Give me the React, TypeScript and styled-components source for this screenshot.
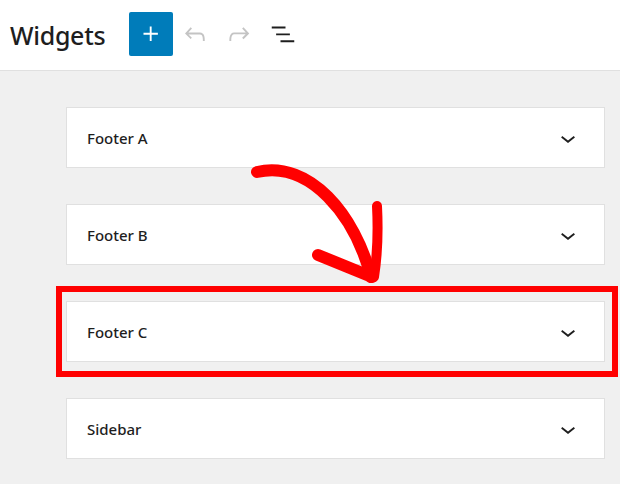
import * as React from "react";
import styled, { createGlobalStyle } from "styled-components";

const GlobalStyle = createGlobalStyle`
  body {
    margin: 0;
    background: #f0f0f0;
    font-family: "Noto Sans", "Open Sans", sans-serif;
    color: #1e1e1e;
  }
`;

const Page = styled.div`
  position: relative;
  min-height: 484px;
  overflow: hidden;
`;

const Header = styled.header`
  height: 70px;
  display: flex;
  align-items: center;
  padding-left: 10px;
  background: #fff;
  border-bottom: 1px solid #e0e0e0;
`;

const Title = styled.h1`
  margin: 0 24px 0 0;
  font-size: 25px;
  font-weight: 500;
  letter-spacing: -0.3px;
`;

const Toolbar = styled.div`
  display: flex;
  align-items: center;
  margin-top: -2px;
`;

const ToolButton = styled.button<{ $primary?: boolean }>`
  width: 44px;
  height: 44px;
  padding: 0;
  border: none;
  border-radius: 2px;
  display: flex;
  align-items: center;
  justify-content: center;
  background: ${(p) => (p.$primary ? "#007cba" : "transparent")};
  color: ${(p) => (p.$primary ? "#fff" : "#1e1e1e")};
  &:disabled {
    color: #c4c4c4;
  }
  svg {
    width: 30px;
    height: 30px;
    fill: currentColor;
  }
`;

const Areas = styled.main`
  display: flex;
  flex-direction: column;
  gap: 36px;
  padding: 36px 15px 0 66px;
`;

const Panel = styled.div`
  height: 61px;
  box-sizing: border-box;
  display: flex;
  align-items: center;
  justify-content: space-between;
  padding: 0 21px 0 20px;
  background: #fff;
  border: 1px solid #e0e0e0;
  font-size: 15px;
  font-weight: 500;
  svg {
    width: 30px;
    height: 30px;
    fill: #1e1e1e;
  }
`;

const Highlight = styled.div`
  border: 6px solid #ff0000;
  margin: -15px -13px -15px -10px;
  padding: 9px 7px 9px 4px;
`;

const Annotation = styled.svg`
  position: absolute;
  left: 0;
  top: 0;
  pointer-events: none;
`;

const Chevron = () => (
  <svg viewBox="0 0 24 24">
    <path d="M17.5 11.6L12 16l-5.5-4.4.9-1.2L12 14l4.6-3.6 1 1.2z" />
  </svg>
);

const AreaPanel = ({ name }: { name: string }) => (
  <Panel>
    <span>{name}</span>
    <Chevron />
  </Panel>
);

export default function App() {
  return (
    <Page>
      <GlobalStyle />
      <Header>
        <Title>Widgets</Title>
        <Toolbar>
          <ToolButton $primary aria-label="Add block">
            <svg viewBox="0 0 24 24">
              <path d="M11 12.5v5h1.5v-5h5V11h-5V6H11v5H6v1.5h5z" />
            </svg>
          </ToolButton>
          <ToolButton disabled aria-label="Undo">
            <svg viewBox="0 0 24 24">
              <path d="M18.3 11.7c-.6-.6-1.4-.9-2.3-.9H6.7l2.9-3.3-1.1-1-4.5 5L8.5 16l1-1-2.7-2.7H16c.5 0 .9.2 1.3.5 1 1 1 3.4 1 4.5v.3h1.5v-.2c0-1.5 0-4.3-1.5-5.7z" />
            </svg>
          </ToolButton>
          <ToolButton disabled aria-label="Redo">
            <svg viewBox="0 0 24 24">
              <path d="M15.6 6.5l-1.1 1 2.9 3.3H8c-.9 0-1.7.3-2.3.9-1.4 1.5-1.4 4.2-1.4 5.6v.2h1.5v-.3c0-1.1 0-3.5 1-4.5.3-.3.7-.5 1.3-.5h9.2L14.5 15l1.1 1.1 4.6-4.6-4.6-5z" />
            </svg>
          </ToolButton>
          <ToolButton aria-label="List view">
            <svg viewBox="0 0 24 24">
              <path d="M3 6h11v1.5H3V6zm3.5 5.5h11V13h-11v-1.5zM21 17H10v1.5h11V17z" />
            </svg>
          </ToolButton>
        </Toolbar>
      </Header>
      <Areas>
        <AreaPanel name="Footer A" />
        <AreaPanel name="Footer B" />
        <Highlight>
          <AreaPanel name="Footer C" />
        </Highlight>
        <AreaPanel name="Sidebar" />
      </Areas>
      <Annotation width="620" height="484" viewBox="0 0 620 484">
        <g fill="none" stroke="#ff0000" strokeLinecap="round" strokeLinejoin="round">
          <path d="M257 172C310 160 355 215 371 277" strokeWidth="12" />
          <path d="M318 255L372 277" strokeWidth="12" />
          <path d="M377 206Q379 245 374 277" strokeWidth="10" />
        </g>
      </Annotation>
    </Page>
  );
}
